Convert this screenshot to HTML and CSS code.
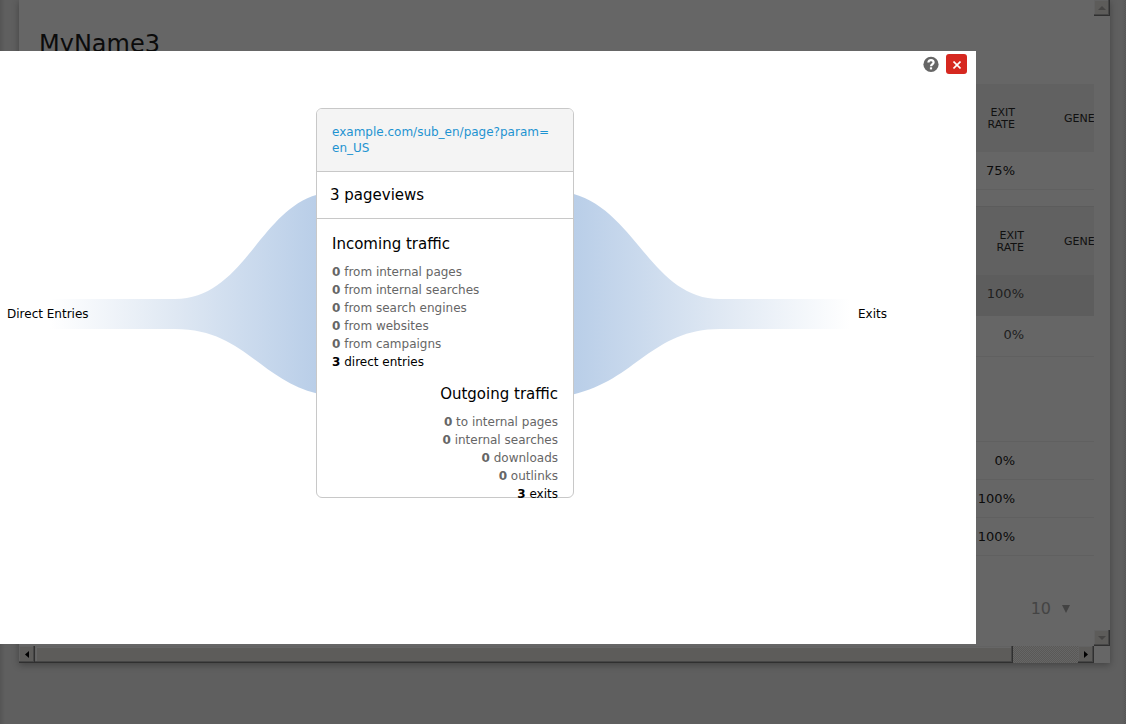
FILE: index.html
```html
<!DOCTYPE html>
<html lang="en">
<head>
<meta charset="utf-8">
<title>Transitions</title>
<link rel="stylesheet" href="styles.css">
</head>
<body>
<div class="page">
  <div class="card">
    <main class="content">
      <h1 class="title">MyName3</h1>
      <section class="table first">
        <div class="row head"><span class="cell">EXIT<br>RATE</span><span class="cell clip">GENE</span></div>
        <div class="row data"><span class="cell">75%</span></div>
      </section>
      <section class="table second">
        <div class="row head"><span class="cell">EXIT<br>RATE</span><span class="cell clip">GENE</span></div>
        <div class="row data hover"><span class="cell">100%</span></div>
        <div class="row data"><span class="cell">0%</span></div>
      </section>
      <section class="table third">
        <div class="row data"><span class="cell">0%</span></div>
        <div class="row data"><span class="cell">100%</span></div>
        <div class="row data"><span class="cell">100%</span></div>
      </section>
      <div class="limit"><span>10</span><svg width="8" height="8" viewBox="0 0 8 8"><path d="M0 0h8L4 8z" fill="#434343"/></svg></div>
    </main>
    <div class="vbar">
      <span class="btn"><svg width="8" height="4" viewBox="0 0 8 4"><path d="M4 0l4 4H0z" fill="#464544"/></svg></span>
      <span class="btn"><svg width="8" height="4" viewBox="0 0 8 4"><path d="M0 0h8L4 4z" fill="#464544"/></svg></span>
    </div>
    <div class="hbar">
      <span class="btn"><svg width="4" height="7" viewBox="0 0 4 7"><path d="M4 0v7L0 3.5z" fill="#000"/></svg></span>
      <span class="thumb"></span>
      <span class="track"></span>
      <span class="btn"><svg width="4" height="7" viewBox="0 0 4 7"><path d="M0 0v7l4-3.5z" fill="#000"/></svg></span>
    </div>
    <div class="corner"></div>
  </div>
</div>

<div class="dialog">
  <svg class="ribbons" width="976" height="593" viewBox="0 51 976 593">
    <defs>
      <linearGradient id="in" gradientUnits="userSpaceOnUse" x1="50" y1="0" x2="316" y2="0"><stop offset="0" stop-color="#fff"/><stop offset=".47" stop-color="#dfe8f3"/><stop offset="1" stop-color="#b9cee8"/></linearGradient>
      <linearGradient id="out" gradientUnits="userSpaceOnUse" x1="850" y1="0" x2="574" y2="0"><stop offset="0" stop-color="#fff"/><stop offset=".47" stop-color="#dfe8f3"/><stop offset="1" stop-color="#b9cee8"/></linearGradient>
    </defs>
    <path fill="url(#in)" d="M50 299H175C243 299 259 211 317 194.700V393.500C259 379 243 329 175 329H50z"/>
    <path fill="url(#out)" d="M850 299H720C652 299 636 211 573 193.700V394.500C636 380 652 329 720 329H850z"/>
  </svg>
  <div class="tools">
    <svg width="16" height="16" viewBox="0 0 16 16"><circle cx="8" cy="8.400" r="7.600" fill="#666"/><path d="M5.400 6.500C5.400 3.300 10.600 3.300 10.600 6.500C10.600 8.300 8 8.200 8 10.300" fill="none" stroke="#fff" stroke-width="2.200"/><path d="M6.900 11.300h2.200v2.100H6.900z" fill="#fff"/></svg>
    <span class="close"><svg width="8" height="8" viewBox="0 0 8 8"><path d="M.5.500l7 7M7.500.500l-7 7" stroke="#fff" stroke-width="1.600"/></svg></span>
  </div>
  <div class="flow">
    <span class="label">Direct Entries</span>
    <article class="panel">
      <header class="url">example.com/sub_en/page?param=<br>en_US</header>
      <div class="views">3 pageviews</div>
      <section class="traffic">
        <h2>Incoming traffic</h2>
        <p><b>0</b> from internal pages</p>
        <p><b>0</b> from internal searches</p>
        <p><b>0</b> from search engines</p>
        <p><b>0</b> from websites</p>
        <p><b>0</b> from campaigns</p>
        <p class="on"><b>3</b> direct entries</p>
      </section>
      <section class="traffic outgoing">
        <h2>Outgoing traffic</h2>
        <p><b>0</b> to internal pages</p>
        <p><b>0</b> internal searches</p>
        <p><b>0</b> downloads</p>
        <p><b>0</b> outlinks</p>
        <p class="on"><b>3</b> exits</p>
      </section>
    </article>
    <span class="label exits">Exits</span>
  </div>
</div>
</body>
</html>
```
FILE: styles.css
```css
* { box-sizing: border-box; }
body { margin: 0; font-family: "DejaVu Sans", sans-serif; color: #0b0b0b; overflow: hidden; }
h1, h2, p { margin: 0; font-weight: normal; }
svg { display: block; }

.page {
  height: 724px;
  padding-left: 19px;
  background:
    linear-gradient(90deg, #555, #5f5f5f00) 0 0 / 5px 100% no-repeat,
    repeating-conic-gradient(#565656 0 25%, #5f5f5f 0 50%) 100% 0 / 2px 2px repeat-y,
    linear-gradient(90deg, #5f5f5f, #595959) 100% 0 / 4px 100% no-repeat,
    #5f5f5f;
}
.card {
  width: 1091px;
  height: 663px;
  display: grid;
  grid-template: 646px 17px / 1075px 16px;
  background: #666;
  box-shadow: 0 2px 7px rgba(0, 0, 0, .3);
}
.content { padding-left: 20px; overflow: hidden; }
.title { height: 84px; padding-top: 30px; font-size: 24px; line-height: 28px; }

.row { display: grid; grid-template-columns: 1fr 68px; align-items: center; }
.second .row { grid-template-columns: 1fr 58px; }
.cell { padding-right: 11px; text-align: right; }
.second .cell { padding-right: 12px; }
.head { height: 68px; padding-top: 2px; background: #616161; font-size: 11px; line-height: 12px; color: #101010; }
.head .clip, .second .clip { padding: 0 0 0 38px; text-align: left; white-space: nowrap; }
.second .clip { padding-left: 28px; }
.data { height: 38px; border-bottom: 1px solid #606060; font-size: 13px; line-height: 16px; }
.second { margin-top: 16px; }
.second .head { height: 69px; border-top: 1px solid #5c5c5c; }
.second .data { height: 41px; padding-bottom: 2px; color: #202020; }
.second .hover { background: #5d5d5d; border-color: #5d5d5d; }
.third { margin-top: 84px; border-top: 1px solid #606060; }
.limit { display: flex; align-items: center; gap: 11px; justify-content: flex-end; margin-top: 43px; padding-right: 24px; font-size: 16px; line-height: 20px; color: #444; }

.vbar { display: flex; flex-direction: column; justify-content: space-between; }
.btn { width: 16px; height: 16px; display: grid; place-items: center; background: #5d5c5a; box-shadow: inset -1px -1px #303030, inset -2px -2px #464646, inset 1px 1px #626262; }
.hbar { display: grid; grid-template-columns: 16px 978px 65px 16px; }
.hbar > * { height: 17px; }
.thumb { background: #5d5c5a; box-shadow: inset -1px -1px #303030, inset -2px -2px #464646, inset 1px 1px #626262, inset 2px 2px #666; }
.track { background: repeating-conic-gradient(#666 0 25%, #5a5957 0 50%) 0 0 / 2px 2px; }
.corner { background: #666; }

/* Modal window floating over the page */
.dialog { position: absolute; left: 0; top: 51px; width: 976px; height: 593px; background: #fff; overflow: hidden; color: #000; }
.ribbons { position: absolute; left: 0; top: 0; }
.tools { position: relative; display: flex; align-items: center; justify-content: flex-end; gap: 7px; height: 26px; padding-right: 9px; }
.close { width: 21px; height: 20px; padding-top: 2px; display: grid; place-items: center; border-radius: 3px; background: #d62820; }
.flow { position: relative; display: grid; grid-template-columns: 309px 258px auto; margin-top: 31px; padding-left: 7px; font-size: 12px; line-height: 16px; }
.label { padding-top: 198px; }
.exits { padding-left: 284px; }
.panel { height: 390px; background: #fff; border: 1px solid #c8c8c8; border-radius: 6px; }
.url { height: 63px; padding: 15px; border-bottom: 1px solid #c8c8c8; border-radius: 5px 5px 0 0; background: #f4f4f4; color: #1e93d1; white-space: nowrap; }
.views { height: 47px; padding: 13px; border-bottom: 1px solid #c8c8c8; font-size: 15px; line-height: 20px; }
.traffic { height: 150px; padding: 15px 15px 0; color: #666; line-height: 18px; }
.traffic h2 { height: 29px; font-size: 15px; line-height: 20px; color: #000; }
.traffic .on { color: #000; }
.outgoing { text-align: right; }
```
